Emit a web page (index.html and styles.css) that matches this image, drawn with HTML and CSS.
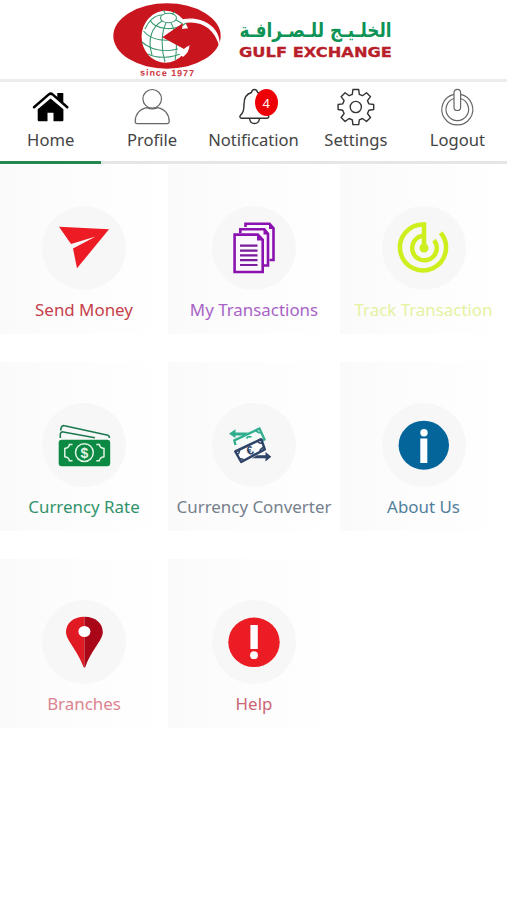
FILE: index.html
```html
<!DOCTYPE html>
<html lang="en">
<head>
  <meta charset="UTF-8" />
  <meta name="viewport" content="width=device-width, initial-scale=1" />
  <title>Gulf Exchange</title>
  <link rel="stylesheet" href="styles.css">
</head>
<body>
  <header class="header">
    <svg class="logo" width="300" height="79" viewBox="108 0 300 79">
      <ellipse cx="167" cy="36" rx="53.7" ry="32.7" fill="#c9151e"/>
      <ellipse cx="165.4" cy="36.8" rx="23.8" ry="26" fill="#fff"/>
      <!-- globe grid -->
      <g fill="none" stroke="#3c9a70" stroke-width="1.1">
        <ellipse cx="168.5" cy="18" rx="8" ry="4.8"/>
        <path d="M150 20c5 10 27 12 37 2M143.500 31c8 10 24 11 34 7M142 42c10 9 24 10 36 7M148 54c10 5 24 4 34-1"/>
        <path d="M162 21c-10 6-15 18-10 34M166 23c-5 10-5 26-1 39M171 23c5 8 7 24 4 37M162 15c-8 0-14 7-17 14M165 13l-2-3M172 14l3-2M176 20l7 4"/>
      </g>
      <!-- arrow and swoosh -->
      <path d="M162.300 37.300L183 23l-1 6c14-2 28 2 35 14L192 50l-3-5-5 4z" fill="#c9151e"/>
      <path d="M180 20.500c18-3.500 34 4 39.500 26C222 26 200 16 184 19z" fill="#fff"/>
      <path d="M182 23.500c18-4 32 4 37.500 23C221 28 202 17 183 20z" fill="#fff"/>
      <path d="M176 50.500q8 .5 13.500-5.500 0 7-6.500 12z" fill="#fff"/>
      <text class="logo-since" x="140" y="75.500" textLength="54" transform="rotate(1 140 76)">since 1977</text>
      <text class="logo-ar" x="239.500" y="37" textLength="152" lengthAdjust="spacingAndGlyphs">الخلـيـج للـصـرافـة</text>
      <text class="logo-en" x="239" y="57.200" textLength="153" lengthAdjust="spacingAndGlyphs">GULF EXCHANGE</text>
    </svg>
  </header>

  <nav class="nav">
    <a class="nav-item active">
      <svg class="nav-icon" viewBox="0 0 40 40">
        <path d="M26.300 6h6v10l-6-5zM19.600 11.500l12.800 10.700V33q0 1.200-1.200 1.200h-8.700v-8.500h-6v8.500H7.900q-1.200 0-1.200-1.200V22.200z"/>
        <path d="M3 20.300L17.800 7.400q1.900-1.500 3.800 0L36.300 20.300" fill="none" stroke="#000" stroke-width="2.500" stroke-linecap="round"/>
      </svg>
      <span>Home</span>
    </a>
    <a class="nav-item">
      <svg class="nav-icon line" viewBox="0 0 40 40">
        <circle cx="20.200" cy="11.800" r="9.300"/>
        <path d="M14.800 20.600C7.500 22 3.200 27.500 3.200 34.500q0 2.200 2.200 2.200h29.600q2.200 0 2.200-2.200c0-7-4.300-12.500-11.600-13.900q-5.400 2.600-10.800 0z"/>
      </svg>
      <span>Profile</span>
    </a>
    <a class="nav-item">
      <svg class="nav-icon line dark" viewBox="0 0 40 40">
        <path d="M20.500 2.500q-2.500 0-3 3C12 7 10 11 10 17c0 7-1 8.500-3.500 11.200-1.200 1.500-.5 3 1 3h25.500c1.800 0 2.300-1.600 1-3C31.500 25.500 31 23 31 17c0-6-2-10-7.500-11.500q-.5-3-3-3zM15.500 31.500c.8 6.700 9.200 6.700 10 0"/>
      </svg>
      <b class="badge">4</b>
      <span>Notification</span>
    </a>
    <a class="nav-item">
      <svg class="nav-icon line dark" viewBox="0 0 40 40">
        <path d="M17.900 2.500h5.800l.6 4.800 3.200 1.400 4-3 4 4-3 4 1.400 3.200 4.800.6v5l-4.800.7-1.400 3.300 3 4-4 4-4-3-3.200 1.400-.6 4.700h-5.800l-.6-4.700-3.200-1.400-4 3-4-4 3-4-1.400-3.300-4.600-.7v-5l4.600-.6 1.400-3.200-3-4 4-4 4 3 3.200-1.400z"/>
        <circle cx="20.800" cy="20" r="5.600"/>
      </svg>
      <span class="shift">Settings</span>
    </a>
    <a class="nav-item">
      <svg class="nav-icon line" viewBox="0 0 40 40">
        <path d="M18 7.300a15.500 15.500 0 1 0 6.600 0M18 11.500a11.300 11.300 0 1 0 6.600 0"/>
        <rect x="18" y="2.300" width="6.600" height="21.200" rx="3.300"/>
      </svg>
      <span class="shift">Logout</span>
    </a>
  </nav>

  <main class="grid">
    <a class="tile send">
      <svg class="tile-icon" viewBox="0 0 84 84">
        <path d="M17 20.700l50 2.600-32 39-4-19.800L53.700 30.500 29 38z" fill="#ed1c24"/>
      </svg>
      <span>Send Money</span>
    </a>
    <a class="tile transactions">
      <svg class="tile-icon" viewBox="0 0 84 84">
        <g fill="#fbf7fd" stroke="#8a12ae" stroke-width="2.600">
          <path d="M33.500 21v-3.300h24l4 4.500V54h-4"/>
          <path d="M28.300 27v-3.800h24l3.700 4.500v31.800h-4"/>
          <path d="M22.600 28.600h23.200l4.900 5.200V66H22.600z"/>
        </g>
        <path d="M57 17v6h5.500zM51.500 22.500v6H57zM45 28v6.500h6.500z" fill="#8a12ae"/>
        <path d="M28 39.700h17.500M28 44.600h17.500M28 49.300h17.500M28 54.200h17.500M28 59h17.500" stroke="#7a1d9c" stroke-width="2.200"/>
      </svg>
      <span>My Transactions</span>
    </a>
    <a class="tile track">
      <svg class="tile-icon" viewBox="0 0 84 84">
        <g fill="none" stroke="#cfee1e" stroke-width="4.500">
          <path d="M58.700 26.800A23 23 0 1 1 42 18.500V42"/>
          <path d="M52 34.200A12.300 12.300 0 1 1 42 29.700"/>
        </g>
        <circle cx="42" cy="42" r="4.500" fill="#cfee1e"/>
      </svg>
      <span>Track Transaction</span>
    </a>
    <a class="tile rate">
      <svg class="tile-icon" viewBox="0 0 84 84">
        <path d="M18.500 27.500l1-3.500q.8-1.800 3-1.200L66 32.200q1.500.5 1.500 2.800M18.300 35v-4q.5-2.500 3-2L53 34.800" fill="none" stroke="#1c7a50" stroke-width="1.600"/>
        <rect x="16.700" y="36.700" width="51.500" height="26.500" rx="3" fill="#0c8a43"/>
        <g fill="none" stroke="#e2f5e6" stroke-width="1.500">
          <circle cx="42.400" cy="49.600" r="8.900"/>
          <path d="M30.500 41.400h-3q-.5 3.600-4.700 4.100v8.200q4.200.5 4.700 4.100h3M54.300 41.400h3q.5 3.600 4.700 4.100v8.200q-4.200.5-4.700 4.100h-3"/>
        </g>
        <text class="dollar" x="42.400" y="54.600">$</text>
      </svg>
      <span>Currency Rate</span>
    </a>
    <a class="tile converter">
      <svg class="tile-icon" viewBox="0 0 84 84">
        <path d="M17 30.700l6.500-4.500v3.300h12.500l-4 3h-8.500V35z" fill="#2fae8e"/>
        <path d="M23.500 42l-1.200-4.500L47.500 25.500l5 11-4 2" fill="#f4fbf9" stroke="#2fae8e" stroke-width="2.300"/>
        <path d="M34.500 35.500q1.500-2.500 5-1.500M44 27q1 3 5 2.500" fill="none" stroke="#2fae8e" stroke-width="1.700"/>
        <path d="M23.300 48.500l25.900-12.300 3.600 10.100-23.600 12.700z" fill="#fff" stroke="#2e4468" stroke-width="2.500" stroke-linejoin="round"/>
        <path d="M24 51.500q3.500 0 3.500-4.500M45.500 38q2 3 5 2M27.500 56q3-1 4.500 1.500M48 49q-.5-3 3.500-4.500" fill="none" stroke="#2e4468" stroke-width="1.500"/>
        <text class="euro" x="38" y="51.500" transform="rotate(-20 38 47.500)">€</text>
        <path d="M59.300 53.700l-5.800 4.900v-3.300H40l5-3h8.500V49z" fill="#2e4468"/>
      </svg>
      <span>Currency Converter</span>
    </a>
    <a class="tile about">
      <svg class="tile-icon" viewBox="0 0 84 84">
        <ellipse cx="41.800" cy="42.200" rx="25.200" ry="24.500" fill="#04659b"/>
        <circle cx="42" cy="29.700" r="3.700" fill="#fff"/>
        <path d="M38.300 35.600h7v24.500h-7z" fill="#fff"/>
      </svg>
      <span>About Us</span>
    </a>
    <a class="tile branches">
      <svg class="tile-icon" viewBox="0 0 84 84">
        <path d="M42.400 16.700C31 16.700 24 23.500 24 32c0 8 10.500 17 16.700 33q.7 2.700 1.700 2.700z" fill="#e01a22"/>
        <path d="M42.400 16.700C53.800 16.700 60.800 23.500 60.800 32c0 8-10.500 17-16.700 33q-.7 2.700-1.700 2.700z" fill="#a90618"/>
        <ellipse cx="42.400" cy="31.500" rx="6" ry="5.500" fill="#fff"/>
      </svg>
      <span>Branches</span>
    </a>
    <a class="tile help">
      <svg class="tile-icon" viewBox="0 0 84 84">
        <ellipse cx="42" cy="42.300" rx="25.700" ry="24.800" fill="#ec1c24"/>
        <path d="M38.400 25h7.400v24h-7.400z" fill="#fff"/>
        <circle cx="42" cy="55.200" r="3.900" fill="#fff"/>
      </svg>
      <span>Help</span>
    </a>
  </main>
</body>
</html>
```
FILE: styles.css
```css
body {
  margin: 0;
  background: #fff;
  color: #444;
  font-family: "Noto Sans", sans-serif;
  font-size: 16.9px;
}
.header {
  height: 79px;
  padding-left: 108px;
  border-bottom: 3px solid #ececec;
}
.logo {
  display: block;
  overflow: visible;
}
.logo-since {
  font: bold 9px "Liberation Sans", sans-serif;
  fill: #cf3540;
}
.logo-ar {
  font: bold 20px "DejaVu Sans", sans-serif;
  fill: #0d9355;
}
.logo-en {
  font: bold 14px "DejaVu Sans", sans-serif;
  fill: #b81f2b;
  stroke: #b81f2b;
  stroke-width: 0.3px;
}
.nav {
  display: flex;
  height: 82px;
  font-size: 16.6px;
}
.nav-item {
  position: relative;
  flex: 1 1 0;
  min-width: 0;
  box-sizing: border-box;
  padding-top: 5px;
  border-bottom: 3px solid #e6e6e6;
  display: flex;
  flex-direction: column;
  align-items: center;
  line-height: 24px;
  white-space: nowrap;
}
.nav-item.active {
  border-bottom-color: #23874f;
}
.nav-icon {
  width: 40px;
  height: 40px;
  margin-bottom: 1px;
}
.shift {
  padding-left: 2px;
}
.line {
  fill: none;
  stroke: #666;
  stroke-width: 1.2;
}
.dark {
  stroke: #333;
  stroke-width: 1.4;
  stroke-linejoin: round;
}
.badge {
  position: absolute;
  left: 52px;
  top: 7px;
  width: 23px;
  height: 27px;
  border-radius: 50%;
  background: #ed0006;
  color: #fff;
  font-size: 13px;
  font-weight: normal;
  line-height: 28px;
  text-align: center;
}
.grid {
  display: grid;
  grid-template-columns: 168px 172px 167px;
  grid-auto-rows: 169px;
  row-gap: 28px;
  padding-top: 1px;
}
.tile {
  display: flex;
  flex-direction: column;
  align-items: center;
  box-sizing: border-box;
  padding-top: 41px;
  background: linear-gradient(90deg, #fafafa 0, #fcfcfc 30%, #fefefe 80%, #fff);
  line-height: 24px;
  white-space: nowrap;
}
.tile-icon {
  width: 84px;
  height: 84px;
  margin-bottom: 8px;
  border-radius: 50%;
  background: #f7f7f7;
}
.dollar {
  font: bold 14px "Liberation Sans", sans-serif;
  fill: #e2f5e6;
  text-anchor: middle;
}
.euro {
  font: bold 12px "Liberation Sans", sans-serif;
  fill: #2e4468;
  text-anchor: middle;
}
.send {
  color: #c63f4b;
}
.transactions {
  color: #a863c6;
}
.track {
  color: #e6f2a0;
}
.rate {
  color: #32936b;
}
.converter {
  color: #75808c;
}
.about {
  color: #507f9c;
}
.branches {
  color: #db8490;
}
.help {
  color: #cc6674;
}
```
